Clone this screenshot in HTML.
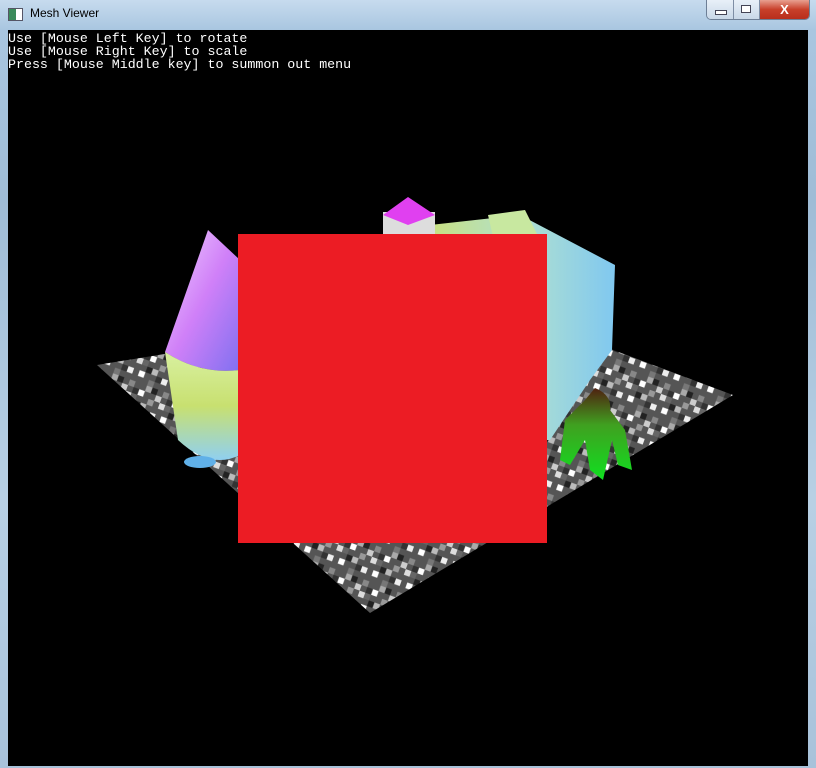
<!DOCTYPE html>
<html><head><meta charset="utf-8"><style>
html,body{margin:0;padding:0;width:816px;height:768px;overflow:hidden;background:#a9c4dc}
.frame{position:absolute;left:0;top:0;width:816px;height:768px;background:linear-gradient(180deg,#c7dbee 0,#a9c6e0 30px,#9fbcd6 200px,#b8d0e4 500px,#a8c2da 768px)}
.title{position:absolute;left:30px;top:6px;font:12px "Liberation Sans",sans-serif;color:#000}
.icon{position:absolute;left:8px;top:8px;width:13px;height:11px;border:1px solid #556;background:linear-gradient(90deg,#3a8a5a 55%,#fff 55%)}
.btns{position:absolute;left:706px;top:0;height:19px;width:102px;border:1px solid #6d7f96;border-top:none;border-radius:0 0 5px 5px;overflow:hidden;display:flex}
.b{height:19px;background:linear-gradient(#e8f0f8,#c9d8e8);border-right:1px solid #7e8ea5;position:relative}
.x{flex:1;background:linear-gradient(#e8a090,#c8402a 50%,#b82e1c);color:#fff;font:bold 13px "Liberation Sans",sans-serif;text-align:center;line-height:19px}
.view{position:absolute;left:8px;top:30px;width:800px;height:736px;background:#000;overflow:hidden}
.txt{position:absolute;left:0;top:2px;font:13.3px/13px "Liberation Mono","DejaVu Sans Mono",monospace;color:#fff;white-space:pre}
</style></head><body>
<div class="frame"></div>
<div class="icon"></div>
<div class="title">Mesh Viewer</div>
<div class="btns"><div class="b" style="width:26px"><div style="position:absolute;left:8px;top:10px;width:10px;height:3px;background:#fff;border:1px solid #445"></div></div><div class="b" style="width:25px"><div style="position:absolute;left:7px;top:5px;width:8px;height:6px;border:1px solid #445;background:#fff"></div></div><div class="x">X</div></div>
<div class="view">
<svg width="800" height="736" viewBox="8 30 800 736" style="position:absolute;left:0;top:0">
<defs>
<pattern id="p" width="24" height="24" patternUnits="userSpaceOnUse" patternTransform="rotate(20) scale(1.5)">
<rect width="24" height="24" fill="#555"/>
<rect x="0" y="0" width="4" height="4" fill="#ddd"/><rect x="8" y="4" width="4" height="4" fill="#222"/><rect x="16" y="0" width="4" height="4" fill="#999"/>
<rect x="4" y="8" width="4" height="4" fill="#fff"/><rect x="12" y="12" width="4" height="4" fill="#777"/><rect x="20" y="8" width="4" height="4" fill="#eee"/>
<rect x="0" y="16" width="4" height="4" fill="#888"/><rect x="8" y="20" width="4" height="4" fill="#fff"/><rect x="16" y="16" width="4" height="4" fill="#222"/>
<rect x="12" y="4" width="4" height="4" fill="#bbb"/><rect x="4" y="20" width="4" height="4" fill="#333"/><rect x="20" y="20" width="4" height="4" fill="#ccc"/>
<rect x="4" y="0" width="4" height="4" fill="#666"/><rect x="16" y="8" width="4" height="4" fill="#333"/><rect x="12" y="16" width="4" height="4" fill="#aaa"/>
</pattern>
<linearGradient id="cone" x1="0" y1="0" x2="1" y2="1"><stop offset="0" stop-color="#f0d0ff"/><stop offset=".5" stop-color="#d080f8"/><stop offset="1" stop-color="#8070f0"/></linearGradient>
<linearGradient id="cyl" x1="0" y1="0" x2="0" y2="1"><stop offset="0" stop-color="#d8f0a0"/><stop offset=".5" stop-color="#c8e070"/><stop offset="1" stop-color="#90d0f0"/></linearGradient>
<linearGradient id="cube" x1="0" y1="0" x2="1" y2="0"><stop offset="0" stop-color="#c8e080"/><stop offset=".5" stop-color="#b0e0d0"/><stop offset="1" stop-color="#80c8f0"/></linearGradient>
<linearGradient id="man" x1="0" y1="0" x2="0" y2="1"><stop offset="0" stop-color="#502010"/><stop offset=".4" stop-color="#40a020"/><stop offset="1" stop-color="#10e020"/></linearGradient>
</defs>
<polygon points="97,365 250,340 600,345 733,395 370,613" fill="url(#p)"/>
<polygon points="430,225 520,215 615,265 612,350 590,380 550,440 430,440" fill="url(#cube)"/>
<polygon points="488,215 525,210 540,240 495,245" fill="#c8e8a0"/>
<rect x="383" y="212" width="52" height="22" fill="#ddd"/>
<polygon points="383,215 408,197 435,215 408,225" fill="#e040f0"/>
<path d="M165,352 L208,230 L240,260 L240,370 Q200,375 165,352Z" fill="url(#cone)"/>
<path d="M165,352 Q200,375 240,370 L240,455 Q210,470 178,440Z" fill="url(#cyl)"/>
<ellipse cx="200" cy="462" rx="16" ry="6" fill="#60b0e8"/>
<path d="M595,388 Q612,395 610,410 L625,430 L632,470 L618,465 L612,440 L603,480 L590,470 L585,440 L570,465 L560,460 L565,420 L585,400Z" fill="url(#man)"/>
<rect x="238" y="234" width="309" height="309" fill="#ec1c24"/>
</svg>
<div class="txt">Use [Mouse Left Key] to rotate
Use [Mouse Right Key] to scale
Press [Mouse Middle key] to summon out menu</div>
</div>
</body></html>
